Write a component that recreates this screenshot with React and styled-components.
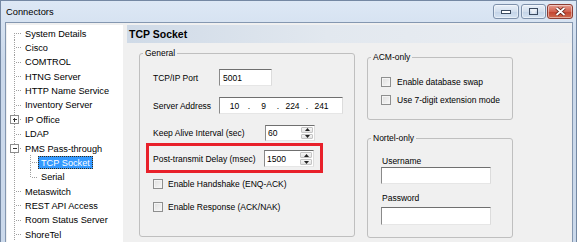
import styled, { createGlobalStyle } from "styled-components";

const GlobalStyle = createGlobalStyle`
  html, body {
    margin: 0;
    padding: 0;
  }
  body {
    width: 577px;
    height: 242px;
    overflow: hidden;
    background: #cfdcec;
    font-family: "Liberation Sans", Arial, sans-serif;
  }
`;

const Window = styled.div`
  width: 577px;
  height: 242px;
  box-sizing: border-box;
  display: flex;
  flex-direction: column;
  padding: 0 3px 0 4px;
  background: linear-gradient(#dde8f5, #cbd9eb 60px);
  border: 1px solid #7488a3;
  border-bottom: none;
  overflow: hidden;
`;

const TitleBar = styled.div`
  height: 21px;
  flex-shrink: 0;
  display: flex;
  align-items: center;
  justify-content: space-between;
  padding-left: 1px;
`;

const Title = styled.div`
  font-size: 9.3px;
  color: #000;
  margin-top: 1px;
`;

const Captions = styled.div`
  display: flex;
  gap: 2px;
  margin-right: 0;
`;

const CaptionButton = styled.div`
  width: ${p => p.$w}px;
  height: 15px;
  box-sizing: border-box;
  border: 1px solid ${p => (p.$close ? "#8d3d33" : "#7d90aa")};
  border-radius: 3px;
  display: flex;
  align-items: center;
  justify-content: center;
  background: ${p =>
    p.$close
      ? "linear-gradient(#e59c90, #d2624f 50%, #c2422f 51%, #cf6b4f)"
      : "linear-gradient(#e9f0f8, #d2deed 50%, #c3d3e7 51%, #d6e3f2)"};
  box-shadow: inset 0 0 0 1px rgba(255, 255, 255, 0.45);
`;

const Client = styled.div`
  flex: 1;
  display: flex;
  min-height: 0;
  background: #f0f0f0;
  border-top: 1px solid #8497b0;
  border-left: 1px solid #8497b0;
  border-right: 1px solid #8497b0;
  padding: 2px 0 0 1px;
`;

const TreePanel = styled.div`
  width: 116px;
  flex-shrink: 0;
  background: #fff;
  padding-top: 1px;
  font-size: 9.2px;
  overflow: hidden;
`;

const TreeRow = styled.div`
  height: 14.36px;
  display: flex;
  align-items: stretch;
`;

const TreeLabel = styled.span`
  align-self: center;
  height: 13px;
  line-height: 12px;
  box-sizing: border-box;
  padding: 0 2px;
  white-space: nowrap;
  border: 1px ${p => (p.$selected ? "dotted #3b2a10" : "solid transparent")};
  background: ${p => (p.$selected ? "#3399ff" : "transparent")};
  color: ${p => (p.$selected ? "#fff" : "#000")};
`;

const RightPanel = styled.div`
  flex: 1;
  margin-left: 4px;
  display: flex;
  flex-direction: column;
  min-width: 0;
`;

const Header = styled.div`
  height: 18px;
  flex-shrink: 0;
  display: flex;
  align-items: center;
  padding-left: 2px;
  background: linear-gradient(to right, #cfdae7, #e2e8ef 45%, #ebeef2);
  font-size: 10.5px;
  font-weight: bold;
  color: #000;
`;

const Body = styled.div`
  display: flex;
  gap: 12px;
  padding: 5px 0 0 12px;
  font-size: 8.5px;
  color: #000;
`;

const Column = styled.div`
  display: flex;
  flex-direction: column;
  gap: 13px;
  margin-top: 4px;
`;

const GroupBox = styled.fieldset`
  margin: 0;
  padding: 0;
  width: ${p => p.$w}px;
  height: ${p => p.$h}px;
  box-sizing: border-box;
  border: 1px solid #bfbfbf;
  border-radius: 3px;
  min-width: 0;
`;

const Legend = styled.legend`
  margin-left: 3px;
  padding: 0 2px;
  height: 10px;
  line-height: 10px;
  font-size: 8.5px;
`;

const GroupContent = styled.div`
  padding-left: ${p => p.$pad}px;
  display: flex;
  flex-direction: column;
  align-items: flex-start;
`;

const Row = styled.div`
  display: flex;
  align-items: center;
  height: ${p => p.$h || 17}px;
  margin-top: ${p => p.$gap}px;
`;

const Label = styled.span`
  width: ${p => p.$w}px;
  flex-shrink: 0;
  white-space: nowrap;
`;

const Highlight = styled.div`
  margin: 2px 0 0 -7px;
  padding: 4px 6px 3px 4px;
  border: 3px solid #e8202a;
`;

const TextBox = styled.div`
  width: ${p => p.$w}px;
  height: ${p => p.$h || 17}px;
  box-sizing: border-box;
  display: flex;
  align-items: center;
  padding-left: 3px;
  background: #fff;
  border: 1px solid;
  border-color: #6f6f6f #dcdcdc #e6e6e6 #8a8a8a;
  white-space: nowrap;
`;

const IpSegment = styled.span`
  width: 23px;
  text-align: center;
`;

const IpDot = styled.span`
  width: 6px;
  text-align: center;
`;

const SpinBox = styled.div`
  width: 50px;
  height: ${p => p.$h || 17}px;
  box-sizing: border-box;
  display: flex;
  background: #fff;
  border: 1px solid;
  border-color: #6f6f6f #dcdcdc #e6e6e6 #8a8a8a;
`;

const SpinValue = styled.span`
  flex: 1;
  display: flex;
  align-items: center;
  padding-left: 2px;
`;

const SpinButtons = styled.div`
  width: 12px;
  display: flex;
  flex-direction: column;
  gap: 1px;
  padding: 1px 1px 1px 0;
`;

const SpinButton = styled.div`
  flex: 1;
  display: flex;
  align-items: center;
  justify-content: center;
  border: 1px solid #c4c4c4;
  border-radius: 1px;
  background: linear-gradient(#f6f6f6, #e3e3e3);
`;

const CheckRow = styled.div`
  display: flex;
  align-items: center;
  gap: ${p => p.$gap}px;
  height: ${p => p.$h || 17}px;
  margin-top: ${p => p.$mt}px;
  white-space: nowrap;
`;

const CheckBox = styled.span`
  width: 10px;
  height: 10px;
  box-sizing: border-box;
  flex-shrink: 0;
  border: 1px solid #8e8f8f;
  background: linear-gradient(135deg, #dedede, #f8f8f8);
  box-shadow: inset 0 0 0 1px #f4f4f4;
`;

const FieldLabel = styled.div`
  height: 10px;
  line-height: 10px;
  margin-top: ${p => p.$mt}px;
  margin-left: 1px;
`;

const treeItems = [
  { label: "System Details", level: 0, first: true },
  { label: "Cisco", level: 0 },
  { label: "COMTROL", level: 0 },
  { label: "HTNG Server", level: 0 },
  { label: "HTTP Name Service", level: 0 },
  { label: "Inventory Server", level: 0 },
  { label: "IP Office", level: 0, toggle: "+" },
  { label: "LDAP", level: 0 },
  { label: "PMS Pass-through", level: 0, toggle: "-" },
  { label: "TCP Socket", level: 1, selected: true },
  { label: "Serial", level: 1, lastChild: true },
  { label: "Metaswitch", level: 0 },
  { label: "REST API Access", level: 0 },
  { label: "Room Status Server", level: 0 },
  { label: "ShoreTel", level: 0 },
];

const dot = { stroke: "#a0a0a0", strokeWidth: 1, strokeDasharray: "1 1" };

function TreeGutter({ item }) {
  const w = item.level === 0 ? 15 : 31;
  return (
    <svg width={w} height="14.36" style={{ flexShrink: 0 }} shapeRendering="crispEdges">
      <line x1="7.5" x2="7.5" y1={item.first ? 7 : 0} y2="15" {...dot} />
      {item.level === 0 && <line x1="9" x2="15" y1="7.5" y2="7.5" {...dot} />}
      {item.level === 1 && (
        <>
          <line x1="23.5" x2="23.5" y1="0" y2={item.lastChild ? 8 : 15} {...dot} />
          <line x1="25" x2="31" y1="7.5" y2="7.5" {...dot} />
        </>
      )}
      {item.toggle && (
        <>
          <rect x="3.5" y="3.5" width="8" height="8" fill="#fff" stroke="#8c8c8c" />
          <line x1="5.5" x2="10" y1="7.5" y2="7.5" stroke="#333" />
          {item.toggle === "+" && <line x1="7.5" x2="7.5" y1="5.5" y2="10" stroke="#333" />}
        </>
      )}
    </svg>
  );
}

function Spinner({ value, h }) {
  return (
    <SpinBox $h={h}>
      <SpinValue>{value}</SpinValue>
      <SpinButtons>
        <SpinButton>
          <svg width="5" height="3"><path d="M2.5 0 L5 3 L0 3 Z" fill="#222" /></svg>
        </SpinButton>
        <SpinButton>
          <svg width="5" height="3"><path d="M0 0 L5 0 L2.5 3 Z" fill="#222" /></svg>
        </SpinButton>
      </SpinButtons>
    </SpinBox>
  );
}

function Check({ label, gap, mt, h }) {
  return (
    <CheckRow $gap={gap} $mt={mt} $h={h}>
      <CheckBox />
      <span>{label}</span>
    </CheckRow>
  );
}

export default function App() {
  const ip = ["10", "9", "224", "241"];
  return (
    <>
      <GlobalStyle />
      <Window>
        <TitleBar>
          <Title>Connectors</Title>
          <Captions>
            <CaptionButton $w={26}>
              <svg width="10" height="4">
                <rect x="0.5" y="0.5" width="9" height="3" fill="#fff" stroke="#3c4b60" />
              </svg>
            </CaptionButton>
            <CaptionButton $w={25} style={{ marginRight: -1 }}>
              <svg width="9" height="7">
                <rect x="0.5" y="0.5" width="8" height="6" fill="none" stroke="#3c4b60" />
                <rect x="1.5" y="1.5" width="6" height="1" fill="#fff" />
                <rect x="2.5" y="3" width="4" height="2.5" fill="#e9eef5" />
              </svg>
            </CaptionButton>
            <CaptionButton $w={26} $close>
              <svg width="11" height="9">
                <path d="M1.5 1 L9.5 8 M9.5 1 L1.5 8" stroke="#5a1a12" strokeWidth="3.4" />
                <path d="M1.5 1 L9.5 8 M9.5 1 L1.5 8" stroke="#fff" strokeWidth="1.8" />
              </svg>
            </CaptionButton>
          </Captions>
        </TitleBar>
        <Client>
          <TreePanel>
            {treeItems.map(item => (
              <TreeRow key={item.label}>
                <TreeGutter item={item} />
                <TreeLabel $selected={item.selected}>{item.label}</TreeLabel>
              </TreeRow>
            ))}
          </TreePanel>
          <RightPanel>
            <Header>TCP Socket</Header>
            <Body>
              <GroupBox $w={216} $h={189}>
                <Legend>General</Legend>
                <GroupContent $pad={13}>
                  <Row $gap={11}>
                    <Label $w={66}>TCP/IP Port</Label>
                    <TextBox $w={53}>5001</TextBox>
                  </Row>
                  <Row $gap={11}>
                    <Label $w={66}>Server Address</Label>
                    <TextBox $w={124}>
                      {ip.map((part, i) => (
                        <span key={i} style={{ display: "contents" }}>
                          <IpSegment>{part}</IpSegment>
                          {i < 3 && <IpDot>.</IpDot>}
                        </span>
                      ))}
                    </TextBox>
                  </Row>
                  <Row $gap={11} $h={16}>
                    <Label $w={112}>Keep Alive Interval (sec)</Label>
                    <Spinner value="60" h={16} />
                  </Row>
                  <Highlight>
                    <Row $gap={0}>
                      <Label $w={111}>Post-transmit Delay (msec)</Label>
                      <Spinner value="1500" />
                    </Row>
                  </Highlight>
                  <Check label="Enable Handshake (ENQ-ACK)" gap={5} mt={2} />
                  <Check label="Enable Response (ACK/NAK)" gap={5} mt={6} />
                </GroupContent>
              </GroupBox>
              <Column>
                <GroupBox $w={146} $h={68}>
                  <Legend>ACM-only</Legend>
                  <GroupContent $pad={13}>
                    <Check label="Enable database swap" gap={6} mt={13} h={13} />
                    <Check label="Use 7-digit extension mode" gap={6} mt={5} h={13} />
                  </GroupContent>
                </GroupBox>
                <GroupBox $w={146} $h={105}>
                  <Legend>Nortel-only</Legend>
                  <GroupContent $pad={13}>
                    <FieldLabel $mt={13}>Username</FieldLabel>
                    <TextBox $w={110} style={{ marginTop: 1 }} />
                    <FieldLabel $mt={9}>Password</FieldLabel>
                    <TextBox $w={110} $h={18} style={{ marginTop: 4 }} />
                  </GroupContent>
                </GroupBox>
              </Column>
            </Body>
          </RightPanel>
        </Client>
      </Window>
    </>
  );
}
